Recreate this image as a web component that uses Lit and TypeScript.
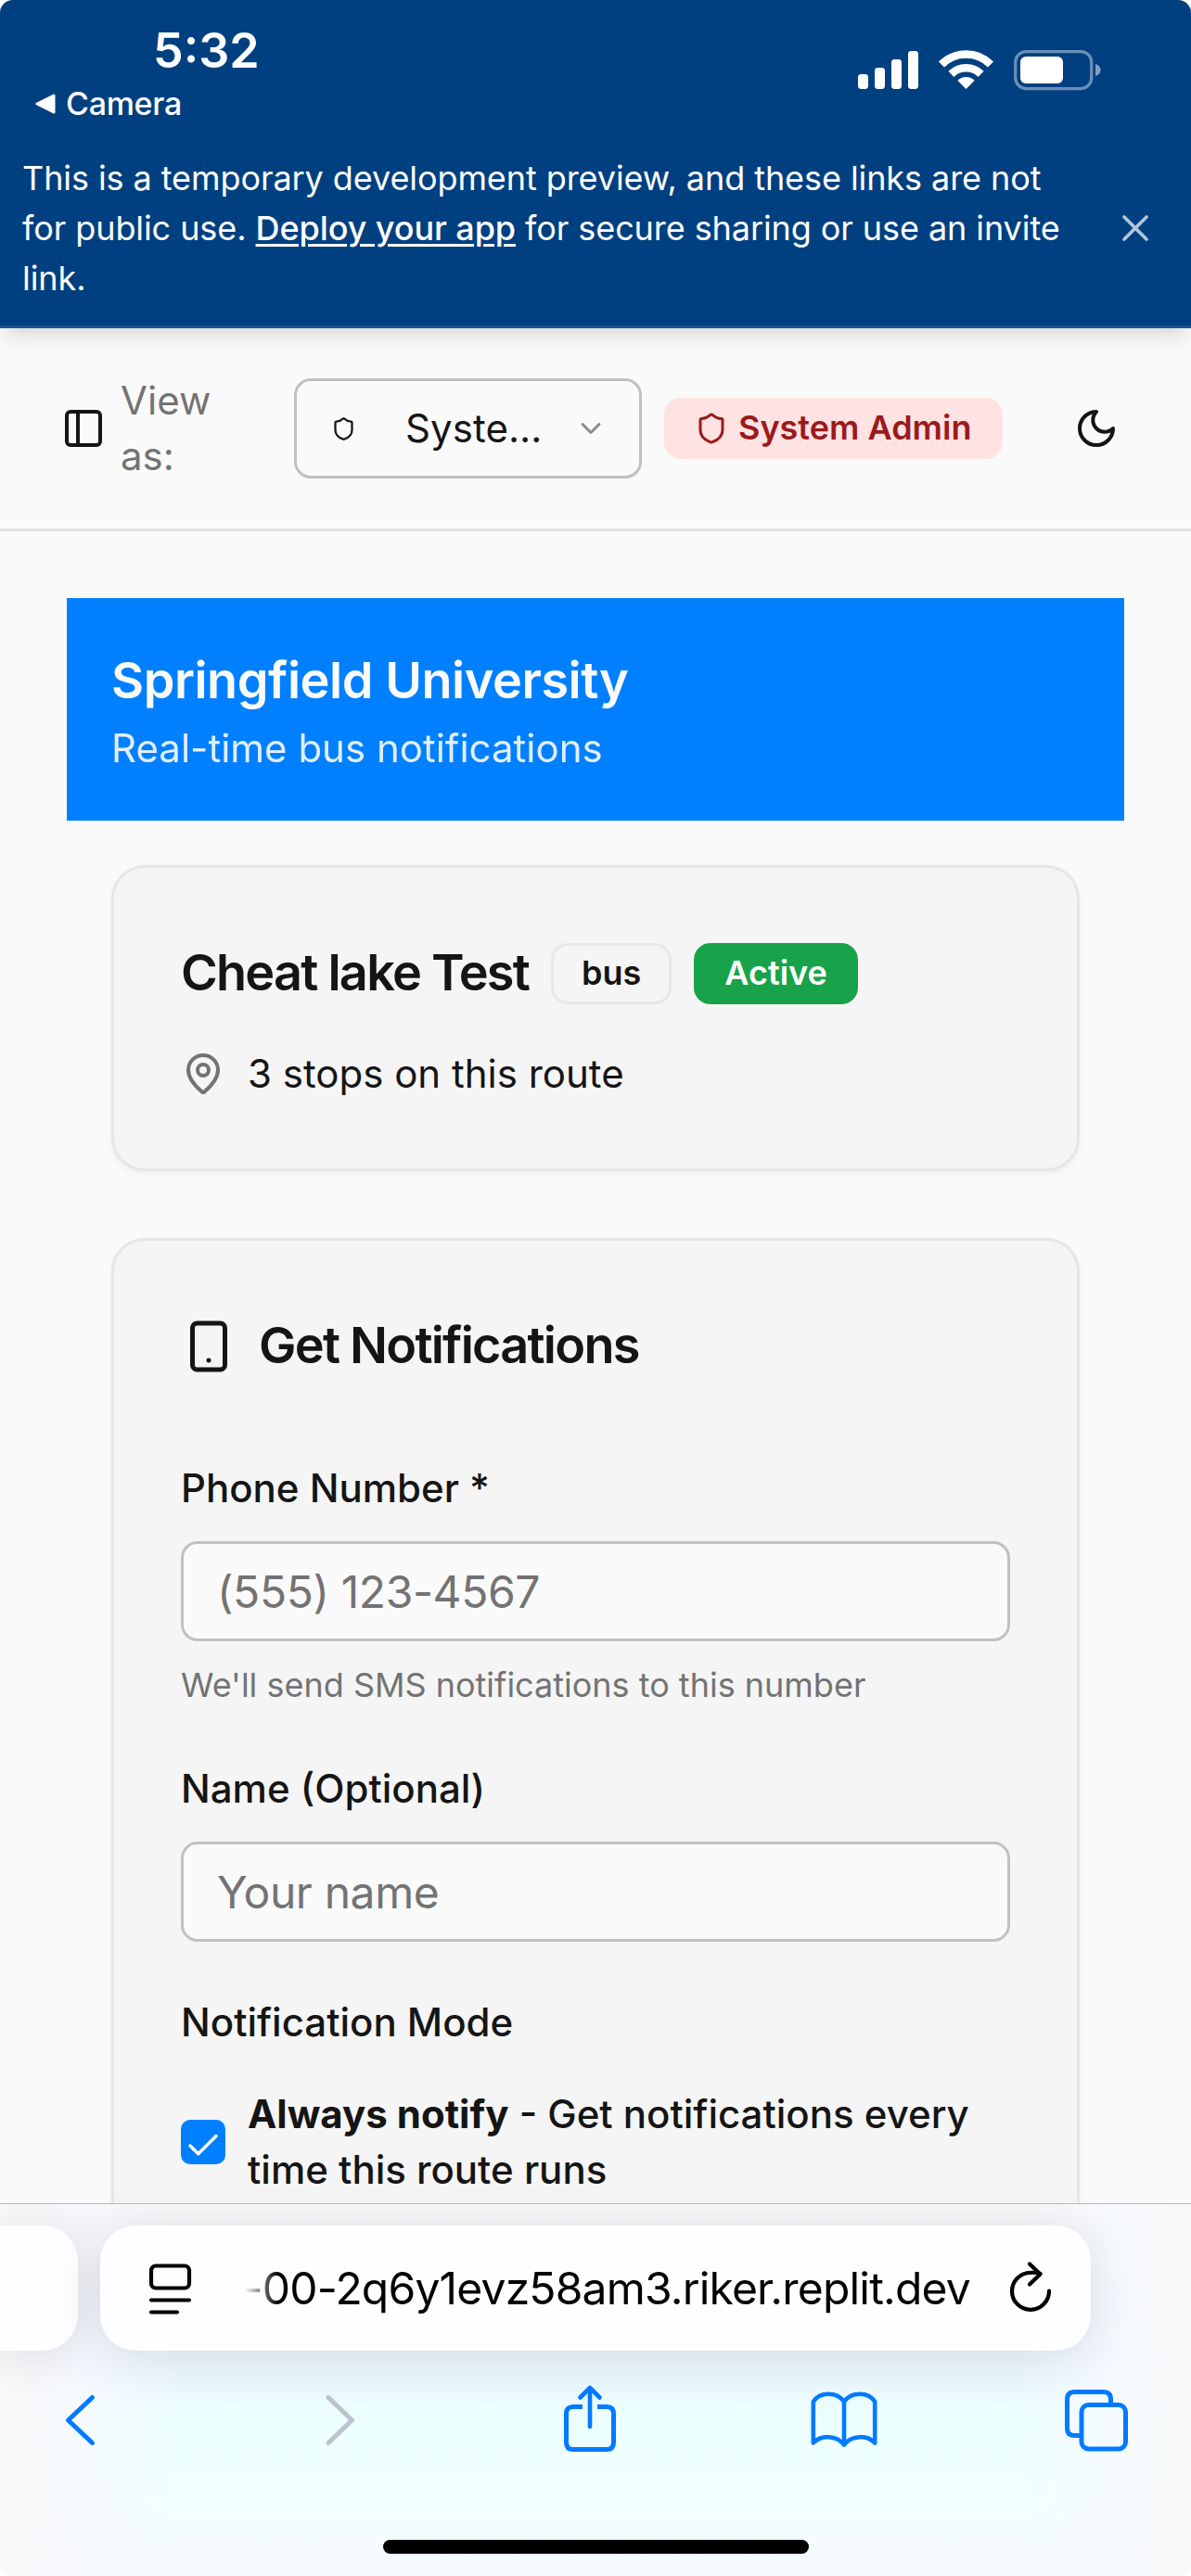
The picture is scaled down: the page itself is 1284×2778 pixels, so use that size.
import { LitElement, html, css, svg } from "lit";
import { customElement, property } from "lit/decorators.js";

const SHAPES: Record<string, unknown> = {
  panel: svg`<rect x="3" y="3" width="18" height="18" rx="2"/><path d="M9 3v18"/>`,
  shield: svg`<path d="M20 13c0 5-3.5 7.5-7.66 8.95a1 1 0 0 1-.67-.01C7.5 20.5 4 18 4 13V6a1 1 0 0 1 1-1c2 0 4.5-1.2 6.24-2.72a1.17 1.17 0 0 1 1.52 0C14.51 3.81 17 5 19 5a1 1 0 0 1 1 1z"/>`,
  chevron: svg`<path d="m6 9 6 6 6-6"/>`,
  moon: svg`<path d="M12 3a6 6 0 0 0 9 9 9 9 0 1 1-9-9Z"/>`,
  pin: svg`<path d="M20 10c0 4.993-5.539 10.193-7.399 11.799a1 1 0 0 1-1.202 0C9.539 20.193 4 14.993 4 10a8 8 0 0 1 16 0"/><circle cx="12" cy="10" r="3"/>`,
  phone: svg`<rect x="5" y="2" width="14" height="20" rx="2"/><path d="M12 18h.01"/>`,
  check: svg`<path d="M20 6 9 17l-5-5"/>`,
};

@customElement("line-icon")
export class LineIcon extends LitElement {
  @property() name = "";
  static styles = css`
    :host { display: block; flex: none; }
    .glyph { display: block; width: 100%; height: 100%; fill: none; stroke: currentColor; stroke-width: 2; stroke-linecap: round; stroke-linejoin: round; }
  `;
  render() {
    return html`<svg class="glyph" viewBox="0 0 24 24">${SHAPES[this.name]}</svg>`;
  }
}

@customElement("status-bar")
export class StatusBar extends LitElement {
  static styles = css`
    :host { display: flex; justify-content: space-between; height: 140px; box-sizing: border-box; color: #fff; }
    .left { display: flex; flex-direction: column; padding-top: 25px; }
    .time { margin-left: 165px; font-size: 52px; line-height: 60px; font-weight: 600; letter-spacing: 0; }
    .back { display: flex; align-items: center; gap: 11px; margin: 3px 0 0 38px; font-size: 34px; line-height: 48px; font-weight: 500; letter-spacing: -0.3px; }
    .tri { width: 22px; height: 22px; display: block; }
    .signals { width: 264px; height: 44px; margin: 54px 95px 0 0; display: block; }
  `;
  render() {
    return html`
      <div class="left">
        <span class="time">5:32</span>
        <span class="back">
          <svg class="tri" viewBox="0 0 22 22"><path d="M2 11 20 2v18z" fill="#fff" stroke="#fff" stroke-width="3" stroke-linejoin="round"/></svg>
          <span>Camera</span>
        </span>
      </div>
      <svg class="signals" viewBox="0 0 264 44">
        <g fill="#fff">
          <rect x="0" y="26" width="11" height="16" rx="3.4"/>
          <rect x="18" y="19" width="11" height="23" rx="3.4"/>
          <rect x="36" y="10" width="11" height="32" rx="3.4"/>
          <rect x="54" y="1" width="11" height="41" rx="3.4"/>
          <path d="M116.5 42 107.3 32.8a13 13 0 0 1 18.4 0z"/>
        </g>
        <g fill="none" stroke="#fff">
          <path d="M100.4 25.9a22.8 22.8 0 0 1 32.2 0" stroke-width="8.6"/>
          <path d="M90 15.5a37.5 37.5 0 0 1 53 0" stroke-width="8.6"/>
          <rect x="169.7" y="1.6" width="82" height="40" rx="11.5" stroke-width="3.2" stroke-opacity=".42"/>
        </g>
        <rect x="175" y="7" width="46" height="29" rx="6" fill="#fff"/>
        <path d="M256 15c3.4 1 5.6 3.600 5.600 6.500s-2.200 5.500-5.600 6.500z" fill="#fff" fill-opacity=".5"/>
      </svg>
    `;
  }
}

@customElement("browser-toolbar")
export class BrowserToolbar extends LitElement {
  static styles = css`
    :host {
      display: flex; flex-direction: column; flex: none; height: 402px; box-sizing: border-box; position: relative;
      border-top: 1px solid #b9babd; padding-top: 23px;
      background:
        linear-gradient(90deg, #f9f9f9 0, rgba(248,249,253,.85) 70px, rgba(240,253,255,0) 190px, rgba(240,253,255,0) 1100px, rgba(247,250,254,.85) 1210px, #f9f9f9 1284px),
        linear-gradient(180deg, #f9f9fa 0, #f4f7fa 60px, #eff6ff 150px, #ebf9ff 195px, #edffff 235px, #f1ffff 325px, #f4fcff 365px, #f5f9fe 402px);
    }
    .pills { display: flex; gap: 24px; }
    .pill { height: 135px; border-radius: 38px; background: #fdfeff; box-shadow: 0 6px 54px rgba(10,20,30,.12); box-sizing: border-box; }
    .prev { width: 84px; border-radius: 0 38px 38px 0; }
    .address { width: 1068px; display: flex; align-items: center; padding: 0 37px 0 49px; }
    .reader { width: 53px; height: 60px; display: block; flex: none; }
    .url { flex: 1; min-width: 0; margin: 0 39px 0 54px; font-size: 48px; line-height: 60px; letter-spacing: -.82px; color: #000; white-space: nowrap; display: flex; justify-content: flex-end; -webkit-mask-image: linear-gradient(90deg, transparent 0, #000 36px); mask-image: linear-gradient(90deg, transparent 0, #000 36px); }
    .reload { width: 54px; height: 60px; display: block; flex: none; }
    .tools { display: grid; grid-template-columns: 281px 258px 266.5px 274.5px 70px; align-items: center; padding-left: 66px; margin-top: 30px; height: 90px; }
    .tool { display: block; height: 90px; fill: none; stroke: #007aff; stroke-width: 5; stroke-linecap: round; stroke-linejoin: round; }
    .off { stroke: #bcc3cd; }
    .home { width: 459px; height: 15px; border-radius: 8px; background: #000; margin: 84px 0 0 413px; }
  `;
  render() {
    return html`
      <div class="pills">
        <div class="pill prev"></div>
        <div class="pill address">
          <svg class="reader" viewBox="0 0 53 60" fill="none" stroke="#000" stroke-width="4.200" stroke-linecap="round">
            <rect x="6" y="5.500" width="41" height="24" rx="5"/>
            <path d="M6 42.500h41M6 55.500h28"/>
          </svg>
          <div class="url"><span>-00-2q6y1evz58am3.riker.replit.dev</span></div>
          <svg class="reload" viewBox="0 0 54 60" fill="none" stroke="#000" stroke-width="4.200" stroke-linecap="round" stroke-linejoin="round">
            <path d="M46 32.500A20 20 0 1 1 26 12.800Q31.500 12.500 36.500 14"/>
            <path d="M25 3.500 36.500 14.400 25 25.500"/>
          </svg>
        </div>
      </div>
      <div class="tools">
        <svg class="tool" width="40" viewBox="0 0 40 90"><path d="M33.500 20.500 7.500 45l26 24.500"/></svg>
        <svg class="tool off" width="40" viewBox="0 0 40 90"><path d="M7 20.500 32.500 45 7 69.500"/></svg>
        <svg class="tool" width="62" viewBox="0 0 62 90">
          <path d="M23 30.500h-10q-7.500 0-7.500 7.500v31q0 7.500 7.500 7.500h36q7.500 0 7.500-7.500v-31q0-7.500-7.500-7.500h-10" stroke-linecap="butt"/>
          <path d="M31 52V10.500M20.500 20.500 31 10l10.500 10.500" stroke-width="4.600"/>
        </svg>
        <svg class="tool" width="76" viewBox="0 0 76 90">
          <path d="M38 71.500V25C30 14 12 14 4.800 25v44.500C13 60.500 30 61 38 71.500 46 61 63 60.500 71.200 69.500V25C64 14 46 14 38 25" stroke-width="4.600"/>
        </svg>
        <svg class="tool" width="70" viewBox="0 0 70 90">
          <path d="M18 61.500h-5.500q-8 0-8-8v-31q0-8 8-8h31q8 0 8 8v5" stroke-linecap="butt"/>
          <rect x="20" y="28.500" width="47.500" height="47.500" rx="7.500"/>
        </svg>
      </div>
      <div class="home"></div>
    `;
  }
}

@customElement("app-root")
export class AppRoot extends LitElement {
  static styles = css`
    :host { display: block; width: 1284px; height: 2778px; background: #fff; overflow: hidden; font-family: Inter, "Liberation Sans", sans-serif; color: #151515; }
    .screen { width: 1284px; height: 2778px; display: flex; flex-direction: column; border-radius: 14px; overflow: hidden; background: #fafafa; }
    .top { flex: none; height: 354px; box-sizing: border-box; background: #004080; border-bottom: 3px solid #1a5494; position: relative; z-index: 1; box-shadow: 0 12px 24px -6px rgba(0,0,0,.16); }
    .notice { display: flex; align-items: center; justify-content: space-between; padding: 25px 46px 0 24px; color: #fff; font-size: 36px; line-height: 54px; }
    .notice p { margin: 0; white-space: nowrap; letter-spacing: -.08px; }
    .notice a { color: #fff; font-weight: 500; text-decoration: underline; text-decoration-thickness: 3px; text-underline-offset: 4px; }
    .close { width: 28px; height: 28px; display: block; fill: none; stroke: #fff; stroke-opacity: .7; stroke-width: 3.600; stroke-linecap: round; }
    .header { flex: none; height: 219px; box-sizing: border-box; border-bottom: 3px solid #dfdfdf; padding: 0 48px; display: flex; align-items: center; }
    .trigger { width: 82px; display: flex; padding-left: 18px; box-sizing: border-box; }
    .i48 { width: 48px; height: 48px; }
    .i36 { width: 36px; height: 36px; }
    .i27 { width: 27px; height: 27px; }
    .i60 { width: 60px; height: 60px; }
    .i42 { width: 42px; height: 42px; }
    .viewas { width: 110px; margin-right: 77px; font-size: 42px; line-height: 60px; color: #737373; }
    .select { width: 375px; height: 108px; box-sizing: border-box; border: 3px solid #c1c1c1; border-radius: 18px; padding: 0 34px 0 37px; display: flex; align-items: center; font-size: 42px; line-height: 60px; }
    .value { margin-left: 53px; letter-spacing: .1px; }
    .select .i36 { margin-left: auto; color: #8a8a8a; }
    .badge { height: 66px; box-sizing: border-box; border: 3px solid transparent; border-radius: 18px; padding: 0 30px; display: flex; align-items: center; gap: 12px; font-size: 36px; line-height: 48px; font-weight: 600; white-space: nowrap; }
    .badge span { padding-bottom: 2px; }
    .admin { width: 365px; margin-left: 24px; background: #ffe2e2; color: #9b1a1a; gap: 11px; }
    .theme { margin-left: auto; padding: 0 30px; }
    .main { flex: 1; min-height: 0; overflow: hidden; padding: 72px 72px 0; }
    .hero { background: #0080ff; padding: 47px 48px 48px; color: #fafafa; }
    .hero h1 { margin: 0 0 1px; font-size: 54px; line-height: 84px; font-weight: 600; letter-spacing: -.45px; }
    .hero p { margin: 0; font-size: 42px; line-height: 60px; opacity: .9; }
    .cards { padding: 48px 48px 0; display: flex; flex-direction: column; gap: 72px; }
    .card { border: 3px solid #e6e6e6; border-radius: 36px; background: #f5f5f5; padding: 72px; box-shadow: 0 3px 6px rgba(0,0,0,.05); }
    .row { display: flex; align-items: center; gap: 24px; }
    .card h2 { margin: 0; padding-bottom: 3px; font-size: 54px; line-height: 81px; font-weight: 600; letter-spacing: -1.75px; white-space: nowrap; }
    .outline { border-color: #e8e8e8; }
    .active { background: #18a34a; color: #fff; }
    .stops { margin-top: 36px; font-size: 42px; line-height: 60px; }
    .stops .i48 { color: #737373; }
    .form { margin-top: 72px; display: flex; flex-direction: column; gap: 48px; }
    .field { display: flex; flex-direction: column; gap: 24px; }
    .label { padding-top: 1px; font-size: 48px; line-height: 71px; }
    .label label { font-size: 42px; line-height: 42px; font-weight: 500; }
    .input { height: 108px; box-sizing: border-box; border: 3px solid #c1c1c1; border-radius: 18px; background: #fafafa; padding: 0 36px; font: 400 48px/72px Inter, "Liberation Sans", sans-serif; letter-spacing: -.4px; color: #151515; width: 100%; display: block; }
    .input::placeholder { color: #737373; opacity: 1; }
    .hint { font-size: 36px; line-height: 46px; padding-bottom: 2px; color: #737373; }
    .mode { gap: 36px; }
    .box { width: 48px; height: 48px; flex: none; border-radius: 10px; background: #0080ff; color: #fff; display: flex; justify-content: center; padding-top: 7px; box-sizing: border-box; }
    .option { font-size: 42px; line-height: 60px; font-weight: 500; white-space: nowrap; }
    .option strong { font-weight: 700; }
  `;

  render() {
    return html`
      <div class="screen">
        <div class="top">
          <status-bar></status-bar>
          <div class="notice">
            <p>This is a temporary development preview, and these links are not<br>for public use. <a>Deploy your app</a> for secure sharing or use an invite<br>link.</p>
            <svg class="close" viewBox="0 0 28 28"><path d="M2 2l24 24M26 2 2 26"/></svg>
          </div>
        </div>
        <div class="header">
          <div class="trigger"><line-icon class="i48" name="panel"></line-icon></div>
          <span class="viewas">View as:</span>
          <div class="select">
            <line-icon class="i27" name="shield"></line-icon>
            <span class="value">Syste…</span>
            <line-icon class="i36" name="chevron"></line-icon>
          </div>
          <div class="badge admin"><line-icon class="i36" name="shield"></line-icon><span>System Admin</span></div>
          <div class="theme"><line-icon class="i48" name="moon"></line-icon></div>
        </div>
        <div class="main">
          <div class="hero">
            <h1>Springfield University</h1>
            <p>Real-time bus notifications</p>
          </div>
          <div class="cards">
            <section class="card">
              <div class="row">
                <h2>Cheat lake Test</h2>
                <div class="badge outline"><span>bus</span></div>
                <div class="badge active"><span>Active</span></div>
              </div>
              <div class="row stops"><line-icon class="i48" name="pin"></line-icon><span>3 stops on this route</span></div>
            </section>
            <section class="card">
              <div class="row"><line-icon class="i60" name="phone"></line-icon><h2>Get Notifications</h2></div>
              <div class="form">
                <div class="field">
                  <div class="label"><label>Phone Number *</label></div>
                  <input class="input" placeholder="(555) 123-4567">
                  <span class="hint">We'll send SMS notifications to this number</span>
                </div>
                <div class="field">
                  <div class="label"><label>Name (Optional)</label></div>
                  <input class="input" placeholder="Your name">
                </div>
                <div class="field mode">
                  <div class="label"><label>Notification Mode</label></div>
                  <div class="row">
                    <span class="box"><line-icon class="i42" name="check"></line-icon></span>
                    <span class="option"><strong>Always notify</strong> - Get notifications every<br>time this route runs</span>
                  </div>
                </div>
              </div>
            </section>
          </div>
        </div>
        <browser-toolbar></browser-toolbar>
      </div>
    `;
  }
}
